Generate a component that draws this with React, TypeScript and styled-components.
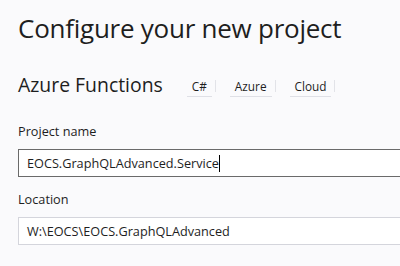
import React from 'react';
import styled, { createGlobalStyle } from 'styled-components';

const GlobalStyle = createGlobalStyle`
  html, body {
    margin: 0;
    padding: 0;
    background: #fafafc;
  }
  body {
    font-family: 'Open Sans', 'Noto Sans', sans-serif;
    color: #1e1e1e;
  }
`;

const tags = ['C#', 'Azure', 'Cloud'];

export default function App() {
  return (
    <>
      <GlobalStyle />
      <StyledRoot>
        <StyledTitle>Configure your new project</StyledTitle>
        <StyledTemplateRow>
          <StyledTemplateName>Azure Functions</StyledTemplateName>
          <StyledTags>
            {tags.map(tag => (
              <StyledTag key={tag}>{tag}</StyledTag>
            ))}
          </StyledTags>
        </StyledTemplateRow>
        <StyledField gap={24}>
          <StyledLabel>Project name</StyledLabel>
          <StyledInput isFocused>
            EOCS.GraphQLAdvanced.Service
            <StyledCaret />
          </StyledInput>
        </StyledField>
        <StyledField gap={13}>
          <StyledLabel>Location</StyledLabel>
          <StyledInput isFocused={false}>W:\EOCS\EOCS.GraphQLAdvanced</StyledInput>
        </StyledField>
      </StyledRoot>
    </>
  );
}

const StyledRoot = styled.div`
  width: 400px;
  height: 266px;
  overflow: hidden;
  box-sizing: border-box;
  padding: 10px 0 0 18px;
  display: flex;
  flex-direction: column;
`;

const StyledTitle = styled.h1`
  margin: 0;
  font-size: 26px;
  font-weight: 400;
  line-height: 36px;
  letter-spacing: -0.25px;
`;

const StyledTemplateRow = styled.div`
  display: flex;
  align-items: flex-end;
  margin-top: 26px;
  gap: 24px;
`;

const StyledTemplateName = styled.h2`
  margin: 0;
  font-size: 19.4px;
  font-weight: 400;
  line-height: 26px;
`;

const StyledTags = styled.div`
  display: flex;
  gap: 18px;
  margin-bottom: 1px;
`;

const StyledTag = styled.span`
  position: relative;
  font-size: 11.8px;
  line-height: 18px;
  padding: 0 5px 1px;
  border-bottom: 1px solid #dfe0e6;

  &::after {
    content: '';
    position: absolute;
    right: -4px;
    top: 3px;
    bottom: 4px;
    width: 1px;
    background: #e2e3e8;
  }
`;

const StyledField = styled.div<{
  gap: number;
}>`
  display: flex;
  flex-direction: column;
  margin-top: ${props => props.gap}px;
`;

const StyledLabel = styled.label`
  font-size: 12.7px;
  line-height: 19px;
  margin-bottom: 8px;
`;

const StyledInput = styled.div<{
  isFocused: boolean;
}>`
  width: 420px;
  height: 28px;
  box-sizing: border-box;
  display: flex;
  align-items: center;
  padding: 0 8px;
  font-size: 12.7px;
  background: #fff;
  border: 1px solid ${props => (props.isFocused ? '#6a6a6a' : '#d4d5dc')};
  white-space: nowrap;
`;

const StyledCaret = styled.span`
  display: inline-block;
  width: 1.5px;
  height: 17px;
  background: #000;
`;
